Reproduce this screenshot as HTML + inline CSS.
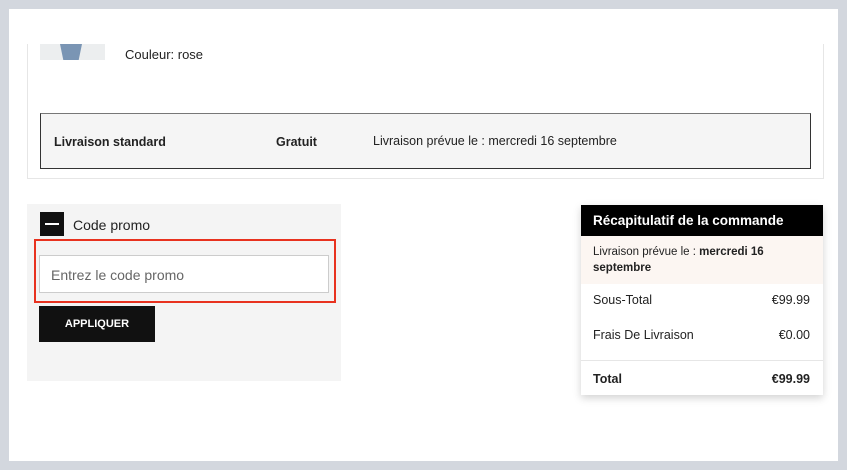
<!DOCTYPE html><html><head><style>
*{margin:0;padding:0;box-sizing:border-box}
body{width:847px;height:470px;background:#d3d7de;font-family:"Liberation Sans",Arial,sans-serif;color:#222;position:relative;overflow:hidden}
.p{position:absolute;left:9px;top:9px;width:829px;height:452px;background:#fff}
.a{position:absolute}
</style></head><body>
<div class="p"></div>
<div class="a" style="left:27px;top:44px;width:797px;height:135px;border:1px solid #e6e6e6;border-top:none"></div>
<div class="a" style="left:40px;top:44px;width:65px;height:16px;background:#eceeef"></div>
<div class="a" style="left:60px;top:44px;width:22px;height:16px;background:#7a95b4;clip-path:polygon(0 0,100% 0,85% 100%,15% 100%)"></div>
<div class="a" style="left:125px;top:47px;font-size:13px">Couleur: rose</div>
<div class="a" style="left:40px;top:113px;width:771px;height:56px;background:#f5f5f5;border:1px solid #333;border-top-color:#777"></div>
<div class="a" style="left:54px;top:135px;font-size:12.5px;font-weight:bold">Livraison standard</div>
<div class="a" style="left:276px;top:135px;font-size:12.5px;font-weight:bold">Gratuit</div>
<div class="a" style="left:373px;top:134px;font-size:12.5px">Livraison prévue le : mercredi 16 septembre</div>
<div class="a" style="left:27px;top:204px;width:314px;height:177px;background:#f4f4f4"></div>
<div class="a" style="left:40px;top:212px;width:24px;height:24px;background:#111"></div>
<div class="a" style="left:45px;top:223px;width:14px;height:2px;background:#fff"></div>
<div class="a" style="left:73px;top:217px;font-size:14px">Code promo</div>
<div class="a" style="left:34px;top:239px;width:302px;height:64px;border:2px solid #e8321f"></div>
<div class="a" style="left:39px;top:255px;width:290px;height:38px;background:#fff;border:1px solid #ccc;font-size:14px;color:#666;padding:11px 0 0 11px">Entrez le code promo</div>
<div class="a" style="left:39px;top:306px;width:116px;height:36px;background:#111;color:#fff;font-size:11px;font-weight:bold;text-align:center;line-height:36px">APPLIQUER</div>
<div class="a" style="left:581px;top:205px;width:242px;height:190px;background:#fff;box-shadow:0 3px 8px rgba(0,0,0,.18)"></div>
<div class="a" style="left:581px;top:205px;width:242px;height:31px;background:#000;color:#fff;font-size:13.5px;font-weight:bold;padding:8px 0 0 12px">Récapitulatif de la commande</div>
<div class="a" style="left:581px;top:236px;width:242px;height:48px;background:#fcf6f2;font-size:11.5px;line-height:16px;padding:8px 12px">Livraison prévue le : <b>mercredi 16 septembre</b></div>
<div class="a" style="left:593px;top:293px;font-size:12.5px">Sous-Total</div>
<div class="a" style="left:700px;top:293px;width:110px;text-align:right;font-size:12.5px">€99.99</div>
<div class="a" style="left:593px;top:328px;font-size:12.5px">Frais De Livraison</div>
<div class="a" style="left:700px;top:328px;width:110px;text-align:right;font-size:12.5px">€0.00</div>
<div class="a" style="left:581px;top:360px;width:242px;height:1px;background:#e6e6e6"></div>
<div class="a" style="left:593px;top:372px;font-size:12.5px;font-weight:bold">Total</div>
<div class="a" style="left:700px;top:372px;width:110px;text-align:right;font-size:12.5px;font-weight:bold">€99.99</div>
</body></html>
